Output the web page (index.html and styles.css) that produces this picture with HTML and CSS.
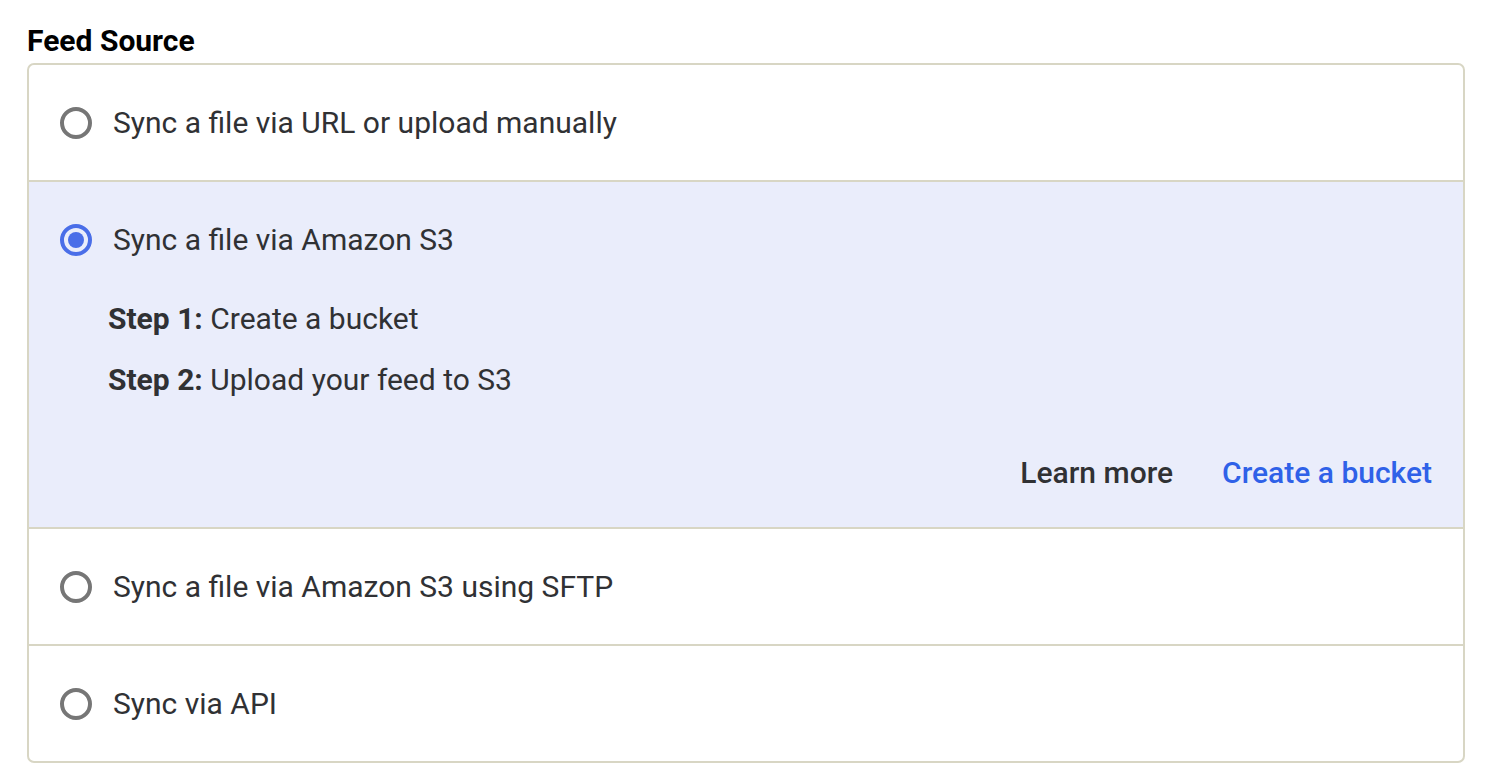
FILE: index.html
```html
<!DOCTYPE html>
<html lang="en">
<head>
<meta charset="utf-8">
<title>Feed Source</title>
<link rel="stylesheet" href="styles.css">
</head>
<body>
<section class="feed-source">
  <h2 class="title">Feed Source</h2>
  <div class="options">
    <div class="option">
      <label class="option-label"><span class="radio"></span><span>Sync a file via URL or upload manually</span></label>
    </div>
    <div class="option selected">
      <label class="option-label"><span class="radio checked"></span><span>Sync a file via Amazon S3</span></label>
      <div class="steps">
        <p class="step"><strong>Step 1:</strong> Create a bucket</p>
        <p class="step"><strong>Step 2:</strong> Upload your feed to S3</p>
      </div>
      <div class="actions">
        <a class="btn btn-plain">Learn more</a>
        <a class="btn btn-link">Create a bucket</a>
      </div>
    </div>
    <div class="option">
      <label class="option-label"><span class="radio"></span><span>Sync a file via Amazon S3 using SFTP</span></label>
    </div>
    <div class="option">
      <label class="option-label"><span class="radio"></span><span>Sync via API</span></label>
    </div>
  </div>
</section>
</body>
</html>
```

FILE: styles.css
```css
* { box-sizing: border-box; }
html, body { margin: 0; padding: 0; background: #ffffff; }
body {
  font-family: Roboto, "Liberation Sans", Arial, sans-serif;
  color: #303134;
}
.feed-source { padding: 24px 27px 0 27px; }
.title {
  margin: 0 0 6px 0;
  font-size: 30px;
  line-height: 33px;
  font-weight: 700;
  color: #000000;
}
.options {
  border: 2px solid #d8d6c4;
  border-radius: 7px;
  overflow: hidden;
}
.option { padding: 38px 31px 37px 31px; }
.option + .option { border-top: 2px solid #d8d6c4; }
.option.selected { background: #eaedfb; padding-bottom: 34px; }
.option-label {
  display: flex;
  align-items: center;
  gap: 21px;
  font-size: 30px;
  line-height: 40px;
  color: #303134;
}
.radio {
  width: 32px;
  height: 32px;
  border-radius: 50%;
  border: 4px solid #767676;
  flex: none;
  display: flex;
  align-items: center;
  justify-content: center;
}
.radio.checked { border-color: #4a6ee8; }
.radio.checked::after {
  content: "";
  width: 16px;
  height: 16px;
  border-radius: 50%;
  background: #4a6ee8;
}
.steps {
  padding-left: 48px;
  margin-top: 39px;
  display: flex;
  flex-direction: column;
  gap: 21px;
}
.step {
  margin: 0;
  font-size: 30px;
  line-height: 40px;
  color: #303134;
}
.step strong { font-weight: 700; }
.actions {
  margin-top: 53px;
  display: flex;
  justify-content: flex-end;
  gap: 49px;
}
.btn {
  font-size: 30px;
  line-height: 40px;
  font-weight: 500;
  cursor: pointer;
}
.btn-plain { color: #303134; }
.btn-link { color: #2f61e8; }
```
